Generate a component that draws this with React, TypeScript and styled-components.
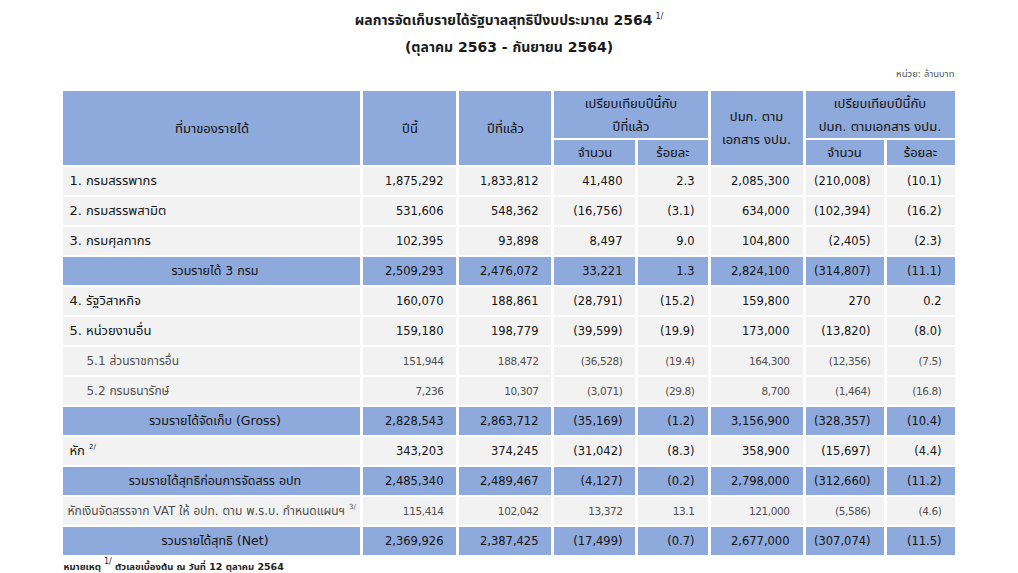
import React from 'react';
import styled, { createGlobalStyle } from 'styled-components';

const GlobalStyle = createGlobalStyle`
    body {
        margin: 0;
        background: #ffffff;
        font-family: Tahoma, "DejaVu Sans", "Noto Sans Thai", "Noto Sans", sans-serif;
        color: #1a1a1a;
    }
`

const Page = styled.div`
    width: 1018px;
    height: 573px;
    display: flex;
    flex-direction: column;
    align-items: center;
    padding-top: 7px;
    box-sizing: border-box;
`

const Title = styled.div`
    font-size: 14px;
    font-weight: bold;
    line-height: 27px;
    text-align: center;
`

const Sup = styled.sup`
    font-size: 8px;
    font-weight: normal;
    vertical-align: 6px;
    line-height: 0;
    margin-left: 3px;
`

const Unit = styled.div`
    width: 891px;
    text-align: right;
    font-size: 9.5px;
    color: #555;
    line-height: 14px;
    margin-top: 6px;
`

const Table = styled.table`
    border-collapse: separate;
    border-spacing: 3px 2px;
    table-layout: fixed;
    width: 897px;
    margin-top: 8px;
    font-size: 11.5px;
`

const HeadCell = styled.th<{ $h?: number }>`
    background: #8ea9db;
    font-weight: normal;
    font-size: 13px;
    text-align: center;
    padding: 0;
    height: ${p => p.$h || 25}px;
    line-height: 23px;
    color: #111;
`

type Kind = 'main' | 'sub' | 'total' | 'note';

const labelSize: Record<Kind, number> = { main: 13, total: 12.5, sub: 12, note: 12 };

const Row = styled.tr<{ $kind: Kind }>`
    height: 28px;
    background: ${p => (p.$kind === 'total' ? '#8ea9db' : '#f2f2f2')};
    color: ${p => (p.$kind === 'sub' || p.$kind === 'note' ? '#505050' : '#141414')};
    font-size: ${p => (p.$kind === 'sub' || p.$kind === 'note' ? '10.5px' : '11.5px')};
    letter-spacing: ${p => (p.$kind === 'sub' || p.$kind === 'note' ? '-0.4px' : '0')};
`

const LabelCell = styled.td<{ $kind: Kind }>`
    padding: 0 0 0 ${p => (p.$kind === 'sub' ? 23 : p.$kind === 'note' ? 4 : 6)}px;
    text-align: ${p => (p.$kind === 'total' ? 'center' : 'left')};
    font-size: ${p => labelSize[p.$kind]}px;
    letter-spacing: 0;
    white-space: nowrap;
    overflow: hidden;
`

const NumCell = styled.td`
    padding: 0 13px 0 0;
    text-align: right;
    white-space: nowrap;
`

const RowSup = styled.sup`
    font-size: 7px;
    vertical-align: 6px;
    line-height: 0;
    margin-left: 4px;
`

const Footnote = styled.div`
    width: 891px;
    font-size: 9.5px;
    font-weight: bold;
    line-height: 14px;
    margin-top: 3px;
    color: #222;
`

type DataRow = { label: string; kind: Kind; sup?: string; v: string[] };

const rows: DataRow[] = [
    { label: '1. กรมสรรพากร', kind: 'main', v: ['1,875,292', '1,833,812', '41,480', '2.3', '2,085,300', '(210,008)', '(10.1)'] },
    { label: '2. กรมสรรพสามิต', kind: 'main', v: ['531,606', '548,362', '(16,756)', '(3.1)', '634,000', '(102,394)', '(16.2)'] },
    { label: '3. กรมศุลกากร', kind: 'main', v: ['102,395', '93,898', '8,497', '9.0', '104,800', '(2,405)', '(2.3)'] },
    { label: 'รวมรายได้ 3 กรม', kind: 'total', v: ['2,509,293', '2,476,072', '33,221', '1.3', '2,824,100', '(314,807)', '(11.1)'] },
    { label: '4. รัฐวิสาหกิจ', kind: 'main', v: ['160,070', '188,861', '(28,791)', '(15.2)', '159,800', '270', '0.2'] },
    { label: '5. หน่วยงานอื่น', kind: 'main', v: ['159,180', '198,779', '(39,599)', '(19.9)', '173,000', '(13,820)', '(8.0)'] },
    { label: '5.1 ส่วนราชการอื่น', kind: 'sub', v: ['151,944', '188,472', '(36,528)', '(19.4)', '164,300', '(12,356)', '(7.5)'] },
    { label: '5.2 กรมธนารักษ์', kind: 'sub', v: ['7,236', '10,307', '(3,071)', '(29.8)', '8,700', '(1,464)', '(16.8)'] },
    { label: 'รวมรายได้จัดเก็บ (Gross)', kind: 'total', v: ['2,828,543', '2,863,712', '(35,169)', '(1.2)', '3,156,900', '(328,357)', '(10.4)'] },
    { label: 'หัก', kind: 'main', sup: '2/', v: ['343,203', '374,245', '(31,042)', '(8.3)', '358,900', '(15,697)', '(4.4)'] },
    { label: 'รวมรายได้สุทธิก่อนการจัดสรร อปท', kind: 'total', v: ['2,485,340', '2,489,467', '(4,127)', '(0.2)', '2,798,000', '(312,660)', '(11.2)'] },
    { label: 'หักเงินจัดสรรจาก VAT ให้ อปท. ตาม พ.ร.บ. กำหนดแผนฯ', kind: 'note', sup: '3/', v: ['115,414', '102,042', '13,372', '13.1', '121,000', '(5,586)', '(4.6)'] },
    { label: 'รวมรายได้สุทธิ (Net)', kind: 'total', v: ['2,369,926', '2,387,425', '(17,499)', '(0.7)', '2,677,000', '(307,074)', '(11.5)'] },
];

const widths = [297, 93, 92, 81, 69, 92, 78, 68];

export default function App() {
    return (
        <>
            <GlobalStyle />
            <Page>
                <Title>
                    ผลการจัดเก็บรายได้รัฐบาลสุทธิปีงบประมาณ 2564<Sup>1/</Sup>
                </Title>
                <Title>(ตุลาคม 2563 - กันยายน 2564)</Title>
                <Unit>หน่วย: ล้านบาท</Unit>
                <Table>
                    <colgroup>
                        {widths.map((w, i) => <col key={i} style={{ width: w }} />)}
                    </colgroup>
                    <thead>
                        <tr>
                            <HeadCell rowSpan={2}>ที่มาของรายได้</HeadCell>
                            <HeadCell rowSpan={2}>ปีนี้</HeadCell>
                            <HeadCell rowSpan={2}>ปีที่แล้ว</HeadCell>
                            <HeadCell colSpan={2} $h={47}>เปรียบเทียบปีนี้กับ<br />ปีที่แล้ว</HeadCell>
                            <HeadCell rowSpan={2}>ปมก. ตาม<br />เอกสาร งปม.</HeadCell>
                            <HeadCell colSpan={2} $h={47}>เปรียบเทียบปีนี้กับ<br />ปมก. ตามเอกสาร งปม.</HeadCell>
                        </tr>
                        <tr>
                            <HeadCell>จำนวน</HeadCell>
                            <HeadCell>ร้อยละ</HeadCell>
                            <HeadCell>จำนวน</HeadCell>
                            <HeadCell>ร้อยละ</HeadCell>
                        </tr>
                    </thead>
                    <tbody>
                        {rows.map(r => (
                            <Row key={r.label} $kind={r.kind}>
                                <LabelCell $kind={r.kind}>
                                    {r.label}
                                    {r.sup && <RowSup>{r.sup}</RowSup>}
                                </LabelCell>
                                {r.v.map((n, i) => <NumCell key={i}>{n}</NumCell>)}
                            </Row>
                        ))}
                    </tbody>
                </Table>
                <Footnote>
                    หมายเหตุ<Sup>1/</Sup> ตัวเลขเบื้องต้น ณ วันที่ 12 ตุลาคม 2564
                </Footnote>
            </Page>
        </>
    );
}
